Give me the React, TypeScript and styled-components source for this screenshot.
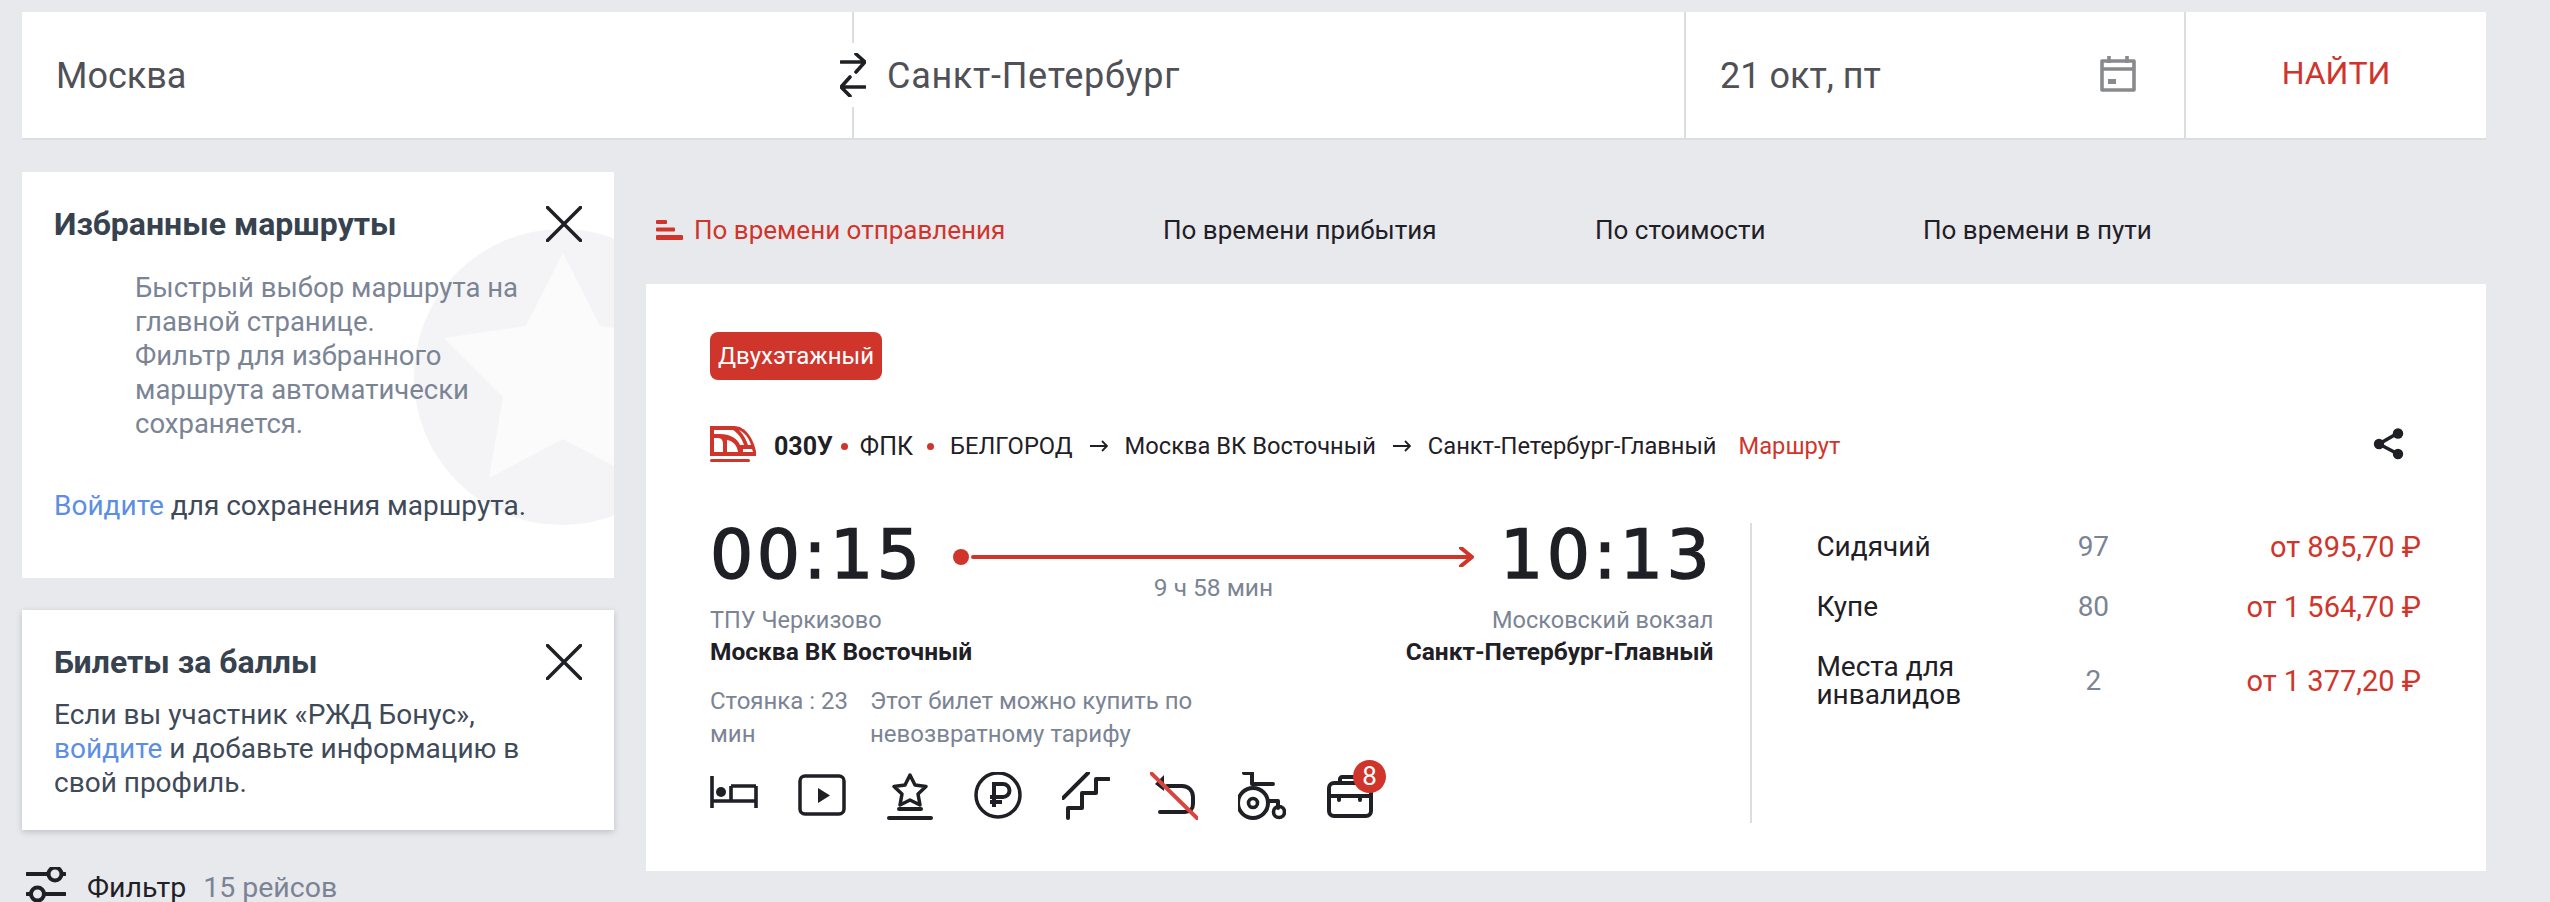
import React from "react";
import styled, { createGlobalStyle } from "styled-components";

const FONT = `Roboto, "Noto Sans", Arial, sans-serif`;
const RED = "#d0352b";
const INK = "#1f2026";
const GREY = "#7b8494";

const Global = createGlobalStyle`
  html, body { margin: 0; padding: 0; background: #e8e9ed; }
  body { font-family: ${FONT}; overflow: hidden; }
  * { box-sizing: border-box; }
`;

const Page = styled.div`
  width: 2550px;
  height: 902px;
  overflow: hidden;
  padding: 12px 64px 0 22px;
  background: #e8e9ed;
`;

const SearchBar = styled.div`
  display: grid;
  grid-template-columns: 832px 832px 500px 1fr;
  height: 128px;
  background: #fff;
  border-bottom: 2px solid #dcdde1;
`;

const Field = styled.div<{ $pad: number }>`
  position: relative;
  display: flex;
  align-items: center;
  justify-content: space-between;
  padding: 2px 48px 0 ${(p) => p.$pad}px;
  border-right: 2px solid #dcdde1;
  font-size: 36px;
  color: #4f5156;
`;

const CityName = styled.span<{ $tracking?: number }>`
  letter-spacing: ${(p) => p.$tracking ?? 0}px;
`;

const CalendarIcon = styled.svg`
  margin-top: -5px;
`;

const SwapButton = styled.div`
  position: absolute;
  right: -16px;
  top: 31px;
  width: 30px;
  height: 64px;
  background: #fff;
  display: flex;
  align-items: center;
  justify-content: center;
`;

const FindButton = styled.div`
  display: flex;
  align-items: center;
  justify-content: center;
  padding-bottom: 5px;
  font-size: 32px;
  color: ${RED};
`;

const Main = styled.div`
  display: grid;
  grid-template-columns: 592px 1840px;
  column-gap: 32px;
  margin-top: 32px;
`;

const Sidebar = styled.div`
  display: flex;
  flex-direction: column;
  gap: 32px;
`;

const Panel = styled.section<{ $height: number; $shadow?: boolean }>`
  position: relative;
  overflow: hidden;
  height: ${(p) => p.$height}px;
  padding: 32px 32px 0 32px;
  background: #fff;
  box-shadow: ${(p) => (p.$shadow ? "0 2px 6px rgba(40,50,70,.22)" : "none")};
`;

const Watermark = styled.svg`
  position: absolute;
  left: 390px;
  top: 55px;
`;

const PanelHead = styled.div`
  position: relative;
  display: flex;
  justify-content: space-between;
  align-items: center;
  height: 40px;
`;

const PanelTitle = styled.h3`
  margin: 0;
  font-size: 32px;
  font-weight: 700;
  color: #37424f;
`;

const Hint = styled.p`
  position: relative;
  margin: 27px 0 0 81px;
  font-size: 27.5px;
  line-height: 34px;
  color: ${GREY};
`;

const PanelText = styled.p<{ $top: number }>`
  position: relative;
  margin: ${(p) => p.$top}px 0 0;
  font-size: 28px;
  line-height: 34px;
  color: #3f4a59;
`;

const TextLink = styled.span`
  color: #5c8ee2;
`;

const FilterRow = styled.div`
  display: flex;
  align-items: center;
  margin: 5px 0 0 4px;
  font-size: 28.5px;
  color: ${INK};
`;

const FilterLabel = styled.span`
  margin-left: 21px;
`;

const FilterCount = styled.span`
  margin-left: 17px;
  color: ${GREY};
`;

const SortBar = styled.div`
  display: flex;
  align-items: center;
  height: 112px;
  padding: 3px 0 0 10px;
  font-size: 26px;
  color: ${INK};
`;

const SortItem = styled.div<{ $width: number; $active?: boolean }>`
  display: flex;
  align-items: center;
  gap: 11px;
  width: ${(p) => p.$width}px;
  color: ${(p) => (p.$active ? RED : INK)};
`;

const Card = styled.article`
  height: 587px;
  padding: 48px 65px 0 64px;
  background: #fff;
  color: ${INK};
`;

const Tag = styled.div`
  display: inline-flex;
  align-items: center;
  height: 48px;
  padding: 0 8px;
  border-radius: 8px;
  background: ${RED};
  color: #fff;
  font-size: 24px;
`;

const TrainRow = styled.div`
  display: flex;
  align-items: center;
  margin-top: 47px;
  height: 38px;
  font-size: 23.7px;
  white-space: nowrap;
`;

const TrainLogo = styled.svg`
  margin-bottom: 4px;
`;

const TrainNumber = styled.b`
  margin-left: 18px;
  font-size: 25px;
  font-weight: 700;
`;

const Carrier = styled.span`
  font-size: 25px;
`;

const Dot = styled.i<{ $left: number; $right: number }>`
  width: 7px;
  height: 7px;
  border-radius: 50%;
  margin: 0 ${(p) => p.$right}px 0 ${(p) => p.$left}px;
  background: ${RED};
`;

const RouteArrow = styled.svg`
  margin: 0 17px;
`;

const RouteLink = styled.span`
  margin-left: 22px;
  color: ${RED};
`;

const ShareIcon = styled.svg`
  margin: 0 17px 4px auto;
`;

const Body = styled.div`
  display: flex;
  margin-top: 58px;
`;

const Journey = styled.div`
  width: 1004px;
`;

const TimeRow = styled.div`
  display: flex;
  align-items: flex-start;
`;

const Time = styled.div`
  font-family: "DejaVu Sans", sans-serif;
  font-size: 68px;
  line-height: 64px;
  letter-spacing: 3.5px;
  -webkit-text-stroke: 1.5px ${INK};
  color: ${INK};
`;

const Track = styled.div`
  display: flex;
  flex-direction: column;
  align-items: center;
  width: 522px;
  margin: 0 auto 0 29px;
  padding-top: 24px;
`;

const Duration = styled.div`
  margin-top: 7px;
  font-size: 24.5px;
  line-height: 28px;
  color: ${GREY};
`;

const Stations = styled.div`
  display: flex;
  justify-content: space-between;
  margin-top: 2px;
`;

const Station = styled.div<{ $end?: boolean }>`
  text-align: ${(p) => (p.$end ? "right" : "left")};
`;

const StationHub = styled.div`
  font-size: 23.5px;
  line-height: 32px;
  color: ${GREY};
`;

const StationName = styled.div`
  font-size: 24.5px;
  line-height: 32px;
  font-weight: 700;
`;

const Notes = styled.div`
  display: flex;
  margin-top: 17px;
  font-size: 24px;
  line-height: 33px;
  color: ${GREY};
`;

const StopNote = styled.div`
  width: 160px;
  padding-right: 16px;
`;

const FareNote = styled.div`
  width: 330px;
`;

const Amenities = styled.div`
  display: flex;
  gap: 40px;
  margin-top: 21px;
  height: 50px;
`;

const Amenity = styled.div`
  position: relative;
  width: 48px;
  height: 50px;
`;

const AmenityBadge = styled.span`
  position: absolute;
  top: -12px;
  right: -12px;
  width: 33px;
  height: 33px;
  border-radius: 50%;
  background: ${RED};
  color: #fff;
  font-size: 26px;
  line-height: 33px;
  text-align: center;
`;

const Divider = styled.div`
  width: 2px;
  height: 300px;
  margin: 0 64px 0 37px;
  background: #dcdde1;
`;

const Fares = styled.div`
  display: grid;
  grid-template-columns: 230px 94px 1fr;
  grid-auto-rows: auto;
  row-gap: 32px;
  align-items: center;
  align-content: start;
  width: 605px;
  padding-top: 10px;
  font-size: 28px;
  line-height: 28px;
`;

const FareName = styled.div``;

const FareCount = styled.div`
  text-align: center;
  color: ${GREY};
`;

const FarePrice = styled.div`
  font-size: 29px;
  text-align: right;
  color: ${RED};
`;

const Line = { fill: "none", stroke: INK, strokeWidth: 3.5, strokeLinecap: "round" as const, strokeLinejoin: "round" as const };

const Close = () => (
  <svg width="36" height="36" viewBox="0 0 36 36">
    <path d="M1.5 1.5 34.5 34.5M34.5 1.5 1.5 34.5" fill="none" stroke={INK} strokeWidth="3.5" strokeLinecap="round" />
  </svg>
);

const Arrow = () => (
  <RouteArrow width="18" height="14" viewBox="0 0 18 14">
    <path d="M0 7H17M12 2 17 7 12 12" fill="none" stroke={INK} strokeWidth="1.8" />
  </RouteArrow>
);

const fares = [
  { name: "Сидячий", count: 97, price: "от 895,70 ₽" },
  { name: "Купе", count: 80, price: "от 1 564,70 ₽" },
  { name: "Места для инвалидов", count: 2, price: "от 1 377,20 ₽" },
];

export default function App() {
  return (
    <Page>
      <Global />
      <SearchBar>
        <Field $pad={34}>
          Москва
          <SwapButton>
            <svg width="26" height="44" viewBox="0 0 26 44">
              <path d="M1 9H25M16 1 25 9 16 19M25 34H1M10 24 1 34 10 43" fill="none" stroke={INK} strokeWidth="3.6" strokeLinecap="round" strokeLinejoin="round" />
            </svg>
          </SwapButton>
        </Field>
        <Field $pad={33}>
          <CityName $tracking={0.7}>Санкт-Петербург</CityName>
        </Field>
        <Field $pad={34}>
          21 окт, пт
          <CalendarIcon width="36" height="37" viewBox="0 0 36 37">
            <path d="M2 6H34V35H2ZM2 14H34M9 1V8M27 1V8" fill="none" stroke="#888a8e" strokeWidth="3.6" strokeLinejoin="round" />
            <rect x="8" y="24" width="8" height="5" fill="#888a8e" />
          </CalendarIcon>
        </Field>
        <FindButton>НАЙТИ</FindButton>
      </SearchBar>

      <Main>
        <Sidebar>
          <Panel $height={406}>
            <Watermark width="300" height="300" viewBox="0 0 300 300">
              <circle cx="150" cy="150" r="148" fill="#f4f4f6" />
              <path d="M151 26 188 99 270 111 211 170 225 251 151 212 77 251 91 170 32 111 114 99Z" fill="#fbfbfc" />
            </Watermark>
            <PanelHead>
              <PanelTitle>Избранные маршруты</PanelTitle>
              <Close />
            </PanelHead>
            <Hint>
              Быстрый выбор маршрута на
              <br />
              главной странице.
              <br />
              Фильтр для избранного
              <br />
              маршрута автоматически
              <br />
              сохраняется.
            </Hint>
            <PanelText $top={48}>
              <TextLink>Войдите</TextLink> для сохранения маршрута.
            </PanelText>
          </Panel>
          <Panel $height={220} $shadow>
            <PanelHead>
              <PanelTitle>Билеты за баллы</PanelTitle>
              <Close />
            </PanelHead>
            <PanelText $top={16}>
              Если вы участник «РЖД Бонус»,
              <br />
              <TextLink>войдите</TextLink> и добавьте информацию в
              <br />
              свой профиль.
            </PanelText>
          </Panel>
          <FilterRow>
            <svg width="40" height="40" viewBox="0 0 40 40">
              <path d="M1 7H21M37 7H39M1 27H4M20 27H39" fill="none" stroke={INK} strokeWidth="4" strokeLinecap="round" />
              <circle cx="29" cy="7" r="6.5" fill="none" stroke={INK} strokeWidth="4" />
              <circle cx="11.5" cy="27" r="6.5" fill="none" stroke={INK} strokeWidth="4" />
            </svg>
            <FilterLabel>Фильтр</FilterLabel>
            <FilterCount>15 рейсов</FilterCount>
          </FilterRow>
        </Sidebar>

        <div>
          <SortBar>
            <SortItem $width={507} $active>
              <svg width="27" height="20" viewBox="0 0 27 20">
                <rect x="0" y="0" width="11" height="4" rx="1" fill={RED} />
                <rect x="0" y="7.5" width="19" height="4" rx="1" fill={RED} />
                <rect x="0" y="15" width="27" height="5" rx="1" fill={RED} />
              </svg>
              По времени отправления
            </SortItem>
            <SortItem $width={432}>По времени прибытия</SortItem>
            <SortItem $width={328}>По стоимости</SortItem>
            <SortItem $width={300}>По времени в пути</SortItem>
          </SortBar>

          <Card>
            <Tag>Двухэтажный</Tag>
            <TrainRow>
              <TrainLogo width="46" height="36" viewBox="0 0 46 36">
                <path d="M0 0H24C36 0 44 14 46 26V30H0Z" fill={RED} />
                <path d="M4 4H23C29 8 32 13 34 19H30C27 12 20 8 10 8H4ZM4 12H8C12 12 13 15 13 18V26H4ZM17 14C23 15 27 19 28 26H17ZM29 4C35 7 39 12 41 19H38C36 13 33 8 29 4ZM33 23H42L43 26H33Z" fill="#fff" />
                <rect x="0" y="33" width="40" height="3" rx="1.5" fill={RED} />
              </TrainLogo>
              <TrainNumber>030У</TrainNumber>
              <Dot $left={8} $right={12} />
              <Carrier>ФПК</Carrier>
              <Dot $left={14} $right={16} />
              БЕЛГОРОД
              <Arrow />
              Москва ВК Восточный
              <Arrow />
              Санкт-Петербург-Главный
              <RouteLink>Маршрут</RouteLink>
              <ShareIcon width="32" height="32" viewBox="0 0 32 32">
                <path d="M26 5 7 16 26 26" fill="none" stroke={INK} strokeWidth="3.5" />
                <circle cx="26" cy="5.5" r="5.2" fill={INK} />
                <circle cx="7" cy="16" r="5.2" fill={INK} />
                <circle cx="26" cy="26" r="5.2" fill={INK} />
              </ShareIcon>
            </TrainRow>

            <Body>
              <Journey>
                <TimeRow>
                  <Time>00:15</Time>
                  <Track>
                    <svg width="522" height="20" viewBox="0 0 522 20">
                      <circle cx="9" cy="10" r="8" fill={RED} />
                      <path d="M21 10H519M509 1 520 10 509 19" fill="none" stroke={RED} strokeWidth="4" strokeLinecap="round" strokeLinejoin="round" />
                    </svg>
                    <Duration>9 ч 58 мин</Duration>
                  </Track>
                  <Time>10:13</Time>
                </TimeRow>
                <Stations>
                  <Station>
                    <StationHub>ТПУ Черкизово</StationHub>
                    <StationName>Москва ВК Восточный</StationName>
                  </Station>
                  <Station $end>
                    <StationHub>Московский вокзал</StationHub>
                    <StationName>Санкт-Петербург-Главный</StationName>
                  </Station>
                </Stations>
                <Notes>
                  <StopNote>Стоянка : 23 мин</StopNote>
                  <FareNote>Этот билет можно купить по невозвратному тарифу</FareNote>
                </Notes>
                <Amenities>
                  <Amenity>
                    <svg width="48" height="50" viewBox="0 0 48 50">
                      <path d="M2 4V36M46 14V36M2 29H46M21 14H46M21 14V29" fill="none" stroke={INK} strokeWidth="3.6" />
                      <circle cx="11" cy="20" r="5" fill={INK} />
                    </svg>
                  </Amenity>
                  <Amenity>
                    <svg width="48" height="50" viewBox="0 0 48 50">
                      <rect x="2" y="4" width="44" height="38" rx="5" {...Line} />
                      <path d="M20 16 32 23.5 20 31Z" fill={INK} />
                    </svg>
                  </Amenity>
                  <Amenity>
                    <svg width="48" height="50" viewBox="0 0 48 50">
                      <path d="M24 3 29 13 40 14.5 32 22 34 33 24 28 14 33 16 22 8 14.5 19 13Z" {...Line} />
                      <path d="M13 37H35" {...Line} strokeWidth="4" />
                      <path d="M3 46H45" {...Line} strokeWidth="4" />
                    </svg>
                  </Amenity>
                  <Amenity>
                    <svg width="48" height="50" viewBox="0 0 48 50">
                      <circle cx="24" cy="23" r="22" {...Line} />
                      <path d="M20 35V12H29A6.5 6.5 0 0 1 29 25H16M16 30H28" fill="none" stroke={INK} strokeWidth="4" />
                    </svg>
                  </Amenity>
                  <Amenity>
                    <svg width="48" height="50" viewBox="0 0 48 50">
                      <path d="M1 26 26 1M6 46V36H20V21H34V7H47" {...Line} strokeWidth="4" />
                    </svg>
                  </Amenity>
                  <Amenity>
                    <svg width="48" height="50" viewBox="0 0 48 50">
                      <path d="M17 14H32C39 14 43 19 43 25V32C43 37 40 40 35 40H10" {...Line} strokeWidth="4" />
                      <path d="M14 3V19L5 12Z" fill={INK} />
                      <path d="M1 1 47 46" fill="none" stroke="#d9443c" strokeWidth="4" strokeLinecap="round" />
                    </svg>
                  </Amenity>
                  <Amenity>
                    <svg width="48" height="50" viewBox="0 0 48 50">
                      <path d="M6 1H14V12M15 12H35M30 29H40V36" {...Line} strokeWidth="4" />
                      <circle cx="15" cy="31" r="15" {...Line} strokeWidth="4" />
                      <circle cx="15" cy="31" r="4.5" {...Line} strokeWidth="3.6" />
                      <circle cx="41" cy="40" r="5.5" {...Line} strokeWidth="3.6" />
                    </svg>
                  </Amenity>
                  <Amenity>
                    <svg width="48" height="50" viewBox="0 0 48 50">
                      <rect x="3" y="11" width="42" height="33" rx="5" {...Line} strokeWidth="4" />
                      <path d="M14 11V7C14 6 15 5 16 5H34V11M3 24H45" {...Line} strokeWidth="4" />
                      <path d="M13 24V28M34 24V28" {...Line} strokeWidth="4" />
                    </svg>
                    <AmenityBadge>8</AmenityBadge>
                  </Amenity>
                </Amenities>
              </Journey>
              <Divider />
              <Fares>
                {fares.map((f) => (
                  <React.Fragment key={f.name}>
                    <FareName>{f.name}</FareName>
                    <FareCount>{f.count}</FareCount>
                    <FarePrice>{f.price}</FarePrice>
                  </React.Fragment>
                ))}
              </Fares>
            </Body>
          </Card>
        </div>
      </Main>
    </Page>
  );
}
